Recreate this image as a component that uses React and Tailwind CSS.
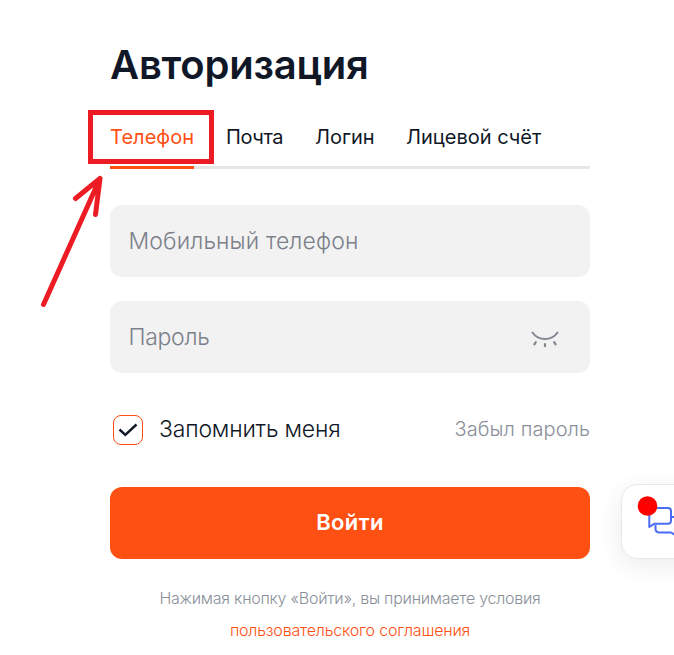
const TABS = [
  { label: 'Телефон', cls: 'text-[#ff5014] w-[84px] tracking-[0.05px]' },
  { label: 'Почта', cls: 'w-[57px] tracking-[-0.4px]' },
  { label: 'Логин', cls: 'w-[59px]' },
  { label: 'Лицевой счёт', cls: 'w-[135px]' },
];

function ClosedEye() {
  return (
    <svg className="h-9 w-9" viewBox="0 0 36 36" fill="none" stroke="#838792" strokeWidth="2" strokeLinecap="round">
      <path d="M5.5 13.5C11.500 22.300 24.500 22.300 30.500 13.500" />
      <path d="M8.800 23.200L7.400 25.300M18 25V27.200M27.200 23.200L28.600 25.300" strokeWidth="2.2" />
    </svg>
  );
}

function Field({ label, spacing, icon }) {
  return (
    <div className="flex h-[72px] items-center justify-between rounded-xl bg-[#f2f2f2] pr-[27px] pl-[18.500px]">
      <span className={`text-[23px] font-light whitespace-nowrap text-[#7c808a] ${spacing}`}>{label}</span>
      {icon}
    </div>
  );
}

function ChatWidget() {
  return (
    <div className="absolute top-[484px] left-[621px] h-[75px] w-[80px] rounded-2xl border border-[#e8e8e8] bg-white shadow-[0_6px_24px_rgba(30,40,60,0.09)]">
      <svg className="absolute top-0 left-0 h-[73px] w-[78px]" viewBox="622 485 78 73" fill="none" stroke="#4b6bf5" strokeWidth="2" strokeLinejoin="round">
        <path d="M649.300 511Q649.300 508 652.300 508H668Q671 508 671 511V520.500Q671 523.700 668 523.700H654.500L649.300 527Z" />
        <path d="M655.500 525V528.500Q655.500 532.500 659.500 532.500H671L677 536V520Q677 517 673 517H671" />
        <circle cx="647.500" cy="506" r="9.800" fill="#ff0000" stroke="none" />
      </svg>
    </div>
  );
}

export default function App() {
  return (
    <div className="relative h-[655px] w-[674px] overflow-hidden bg-white font-['Inter','Noto_Sans',sans-serif] text-[#101828]">
      <main className="ml-[110px] flex w-[480px] flex-col pt-[40px]">
        <h1 className="h-[70px] text-[40px] leading-[50px] font-semibold tracking-[-0.2px] whitespace-nowrap">Авторизация</h1>
        <nav className="flex h-[59px] gap-8 border-b-[3px] border-[#e6e6e6]">
          {TABS.map((t, i) => (
            <span key={t.label} className={`h-[59px] shrink-0 text-[20px] leading-[54px] whitespace-nowrap ${i === 0 ? 'border-b-[3px] border-[#ff5014]' : ''} ${t.cls}`}>
              {t.label}
            </span>
          ))}
        </nav>
        <div className="mt-9 flex flex-col gap-6">
          <Field label="Мобильный телефон" spacing="tracking-[0.12px]" />
          <Field label="Пароль" spacing="tracking-[-0.3px]" icon={<ClosedEye />} />
        </div>
        <div className="mt-[42px] flex h-[30px] items-center pl-[3px]">
          <span className="flex h-[30px] w-[30px] items-center justify-center rounded-lg border border-[#ff5014]">
            <svg className="h-7 w-7 shrink-0" viewBox="0 0 28 28" fill="none" stroke="#101828" strokeWidth="2.4">
              <path d="M5.500 13.500L11.300 18.800L22.500 8.500" />
            </svg>
          </span>
          <span className="mb-[2px] ml-4 text-[23px] leading-[28px] font-light tracking-[-0.2px] whitespace-nowrap">Запомнить меня</span>
          <span className="mb-[2px] ml-auto text-[20px] leading-[28px] font-light tracking-[0.08px] whitespace-nowrap text-[#8a8f99]">Забыл пароль</span>
        </div>
        <button className="mt-[42px] h-[72px] rounded-xl bg-[#ff5014] pb-[2px] text-[22px] font-semibold tracking-[0.3px] text-white">Войти</button>
        <p className="mt-[23px] text-center text-base leading-8 font-light tracking-[-0.25px] whitespace-nowrap text-[#8a8f99]">
          Нажимая кнопку «Войти», вы принимаете условия
          <br />
          <span className="tracking-[-0.18px] text-[#ff5014]">пользовательского соглашения</span>
        </p>
      </main>
      <div className="absolute top-[110px] left-[88px] h-[54px] w-[126px] border-[5px] border-[#ed1c24]" />
      <svg className="absolute top-[160px] left-[30px] h-[160px] w-[100px]" viewBox="30 160 100 160" fill="none" stroke="#ed1c24" strokeWidth="5" strokeLinecap="round" strokeLinejoin="round">
        <path d="M43.500 304.500L100 178.500M75.500 198.500L100 178.500L95.500 214.500" />
      </svg>
      <ChatWidget />
    </div>
  );
}
